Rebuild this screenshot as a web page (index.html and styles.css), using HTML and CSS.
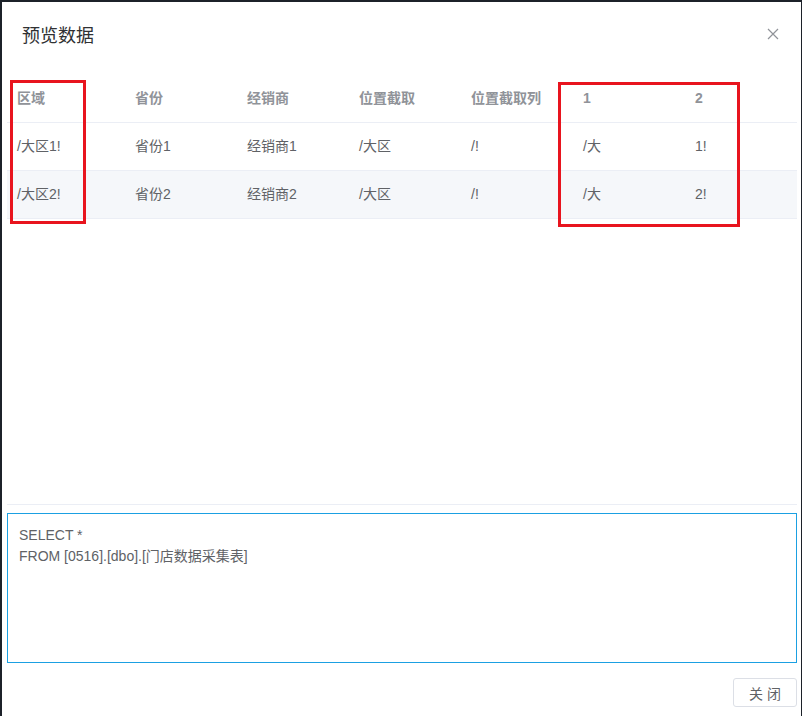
FILE: index.html
```html
<!DOCTYPE html>
<html lang="zh-CN">
<head>
<meta charset="utf-8">
<title>预览数据</title>
<link rel="stylesheet" href="styles.css">
</head>
<body>
<div class="dialog">
  <div class="header">
    <span class="title">预览数据</span>
    <button class="close" aria-label="关闭">
      <svg width="12" height="12" viewBox="0 0 12 12"><path d="M1 1L11 11M11 1L1 11" stroke="#909399" stroke-width="1.2" fill="none"/></svg>
    </button>
  </div>
  <div class="table-wrap">
    <table class="grid">
      <colgroup>
        <col class="c-first"><col class="c"><col class="c"><col class="c"><col class="c"><col class="c"><col class="c">
      </colgroup>
      <thead>
        <tr><th>区域</th><th>省份</th><th>经销商</th><th>位置截取</th><th>位置截取列</th><th>1</th><th>2</th></tr>
      </thead>
      <tbody>
        <tr><td>/大区1!</td><td>省份1</td><td>经销商1</td><td>/大区</td><td>/!</td><td>/大</td><td>1!</td></tr>
        <tr class="stripe"><td>/大区2!</td><td>省份2</td><td>经销商2</td><td>/大区</td><td>/!</td><td>/大</td><td>2!</td></tr>
      </tbody>
    </table>
  </div>
  <div class="sql">SELECT *
FROM [0516].[dbo].[门店数据采集表]</div>
  <div class="footer">
    <button class="btn">关 闭</button>
  </div>
  <div class="mark mark-a"></div>
  <div class="mark mark-b"></div>
</div>
</body>
</html>
```
FILE: styles.css
```css
html, body {
  margin: 0;
  padding: 0;
}
body {
  background: #1c2129;
  height: 716px;
  overflow: hidden;
  font-family: "Liberation Sans", "Noto Sans CJK SC", sans-serif;
}
.dialog {
  position: relative;
  margin: 2px 1px 0 2px;
  height: 714px;
  background: #fff;
  display: flex;
  flex-direction: column;
}
.header {
  display: flex;
  justify-content: space-between;
  align-items: center;
  padding: 22px 20px 0 20px;
  height: 24px;
}
.title {
  font-size: 18px;
  line-height: 24px;
  color: #303133;
}
.close {
  border: 0;
  background: none;
  padding: 0;
  margin-right: 2px;
  margin-top: -4px;
  width: 12px;
  height: 12px;
  display: flex;
  cursor: pointer;
}
.table-wrap {
  margin: 27px 4px 0 5px;
  height: 429px;
  border-bottom: 1px solid #ebeef5;
}
.grid {
  width: 790px;
  border-collapse: collapse;
  table-layout: fixed;
  font-size: 14px;
}
.c-first { width: 118px; }
.c { width: 112px; }
.grid th, .grid td {
  height: 47px;
  padding: 0 10px;
  text-align: left;
  border-bottom: 1px solid #ebeef5;
  white-space: nowrap;
  line-height: 23px;
}
.grid th {
  color: #909399;
  font-weight: bold;
}
.grid td {
  color: #606266;
}
.grid tr.stripe td {
  background: #f5f7fa;
}
.sql {
  margin: 8px 4px 0 5px;
  height: 126px;
  border: 1px solid #1ba0e2;
  padding: 11px 11px 11px 11px;
  font-size: 14px;
  line-height: 21px;
  color: #606266;
  white-space: pre-line;
}
.footer {
  display: flex;
  justify-content: flex-end;
  margin: 15px 4px 0 0;
}
.btn {
  width: 64px;
  height: 29px;
  border: 1px solid #dcdfe6;
  border-radius: 3px;
  background: #fff;
  color: #606266;
  font-family: "Liberation Sans", "Noto Sans CJK SC", sans-serif;
  font-size: 14px;
  padding: 0;
  cursor: pointer;
}
.mark {
  position: absolute;
  border: 3px solid #e8141e;
  box-sizing: border-box;
}
.mark-a {
  left: 8px;
  top: 78px;
  width: 76px;
  height: 144px;
}
.mark-b {
  left: 556px;
  top: 80px;
  width: 182px;
  height: 145px;
}
```
